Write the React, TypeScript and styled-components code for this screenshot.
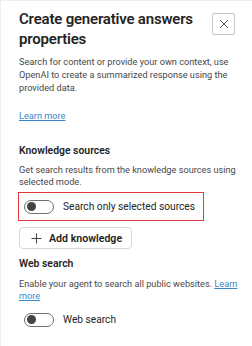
import React from "react";
import styled, { createGlobalStyle } from "styled-components";

const Global = createGlobalStyle`
  html, body { margin: 0; padding: 0; background: #fff; }
  * { box-sizing: border-box; }
`;

const Panel = styled.div`
  width: 252px;
  height: 346px;
  background: #fff;
  border-left: 1px solid #eeeeee;
  border-top: 1px solid #eeeeee;
  padding: 8px 16px 0 18px;
  font-family: Roboto, "Segoe UI", sans-serif;
  color: #242424;
  overflow: hidden;
  white-space: nowrap;
`;

const Header = styled.div`
  display: flex;
  align-items: flex-start;
  justify-content: space-between;
`;

const Title = styled.h1`
  margin: 0;
  font-size: 15px;
  line-height: 20px;
  letter-spacing: -0.2px;
  font-weight: 600;
  color: #242424;
`;

const CloseButton = styled.button`
  width: 23px;
  height: 22px;
  margin-top: 4px;
  margin-right: 1px;
  border: 1px solid #c6c6c6;
  border-radius: 2px;
  background: #fff;
  display: flex;
  align-items: center;
  justify-content: center;
  padding: 0;
`;

const Text = styled.p<{ $mt: number; $lh: number }>`
  margin: ${(p) => p.$mt}px 0 0 0;
  font-size: 9.2px;
  line-height: ${(p) => p.$lh}px;
  color: #484848;
`;

const Link = styled.a`
  color: #3a87c9;
  text-decoration: underline;
`;

const LinkLine = styled.div`
  margin-top: 15px;
  font-size: 9.2px;
  line-height: 13px;
`;

const SectionTitle = styled.h2<{ $mt: number }>`
  margin: ${(p) => p.$mt}px 0 0 0;
  font-size: 10.4px;
  line-height: 16px;
  font-weight: 600;
  color: #242424;
`;

const ToggleRow = styled.div<{ $highlight?: boolean; $mt: number }>`
  display: flex;
  align-items: center;
  gap: 9px;
  width: 186px;
  height: 29px;
  margin: ${(p) => p.$mt}px 0 0 -1px;
  padding-left: 5px;
  border: 1.5px solid ${(p) => (p.$highlight ? "#e2383c" : "transparent")};
  font-size: 10.2px;
  color: #242424;
`;

const Track = styled.span`
  width: 30px;
  height: 14px;
  border: 1px solid #707070;
  border-radius: 7px;
  display: flex;
  align-items: center;
  padding-left: 2px;
  flex-shrink: 0;
`;

const Knob = styled.span`
  width: 9px;
  height: 9px;
  border-radius: 50%;
  background: #444;
`;

const AddButton = styled.button`
  margin-top: 6px;
  display: flex;
  align-items: center;
  gap: 7px;
  height: 22px;
  width: 113px;
  padding: 0 0 0 11px;
  border: 1px solid #d6d6d6;
  border-radius: 4px;
  background: #fff;
  font-family: inherit;
  font-size: 10.6px;
  font-weight: 600;
  color: #242424;
`;

export default function App() {
  return (
    <>
      <Global />
      <Panel>
        <Header>
          <Title>
            Create generative answers
            <br />
            properties
          </Title>
          <CloseButton aria-label="Close">
            <svg width="10" height="10" viewBox="0 0 10 10">
              <path d="M1 1 L9 9 M9 1 L1 9" stroke="#424242" strokeWidth="0.9" />
            </svg>
          </CloseButton>
        </Header>
        <Text $mt={6} $lh={13}>
          Search for content or provide your own context, use
          <br />
          OpenAI to create a summarized response using the
          <br />
          provided data.
        </Text>
        <LinkLine>
          <Link href="#">Learn more</Link>
        </LinkLine>
        <SectionTitle $mt={21}>Knowledge sources</SectionTitle>
        <Text $mt={5} $lh={12}>
          Get search results from the knowledge sources using
          <br />
          selected mode.
        </Text>
        <ToggleRow $highlight $mt={4}>
          <Track>
            <Knob />
          </Track>
          <span>Search only selected sources</span>
        </ToggleRow>
        <AddButton>
          <svg width="11" height="11" viewBox="0 0 11 11">
            <path d="M5.5 0.5 V10.5 M0.5 5.5 H10.5" stroke="#424242" strokeWidth="1" />
          </svg>
          Add knowledge
        </AddButton>
        <SectionTitle $mt={7}>Web search</SectionTitle>
        <Text $mt={6} $lh={11.5}>
          Enable your agent to search all public websites. <Link href="#">Learn</Link>
          <br />
          <Link href="#">more</Link>
        </Text>
        <ToggleRow $mt={4}>
          <Track>
            <Knob />
          </Track>
          <span>Web search</span>
        </ToggleRow>
      </Panel>
    </>
  );
}
